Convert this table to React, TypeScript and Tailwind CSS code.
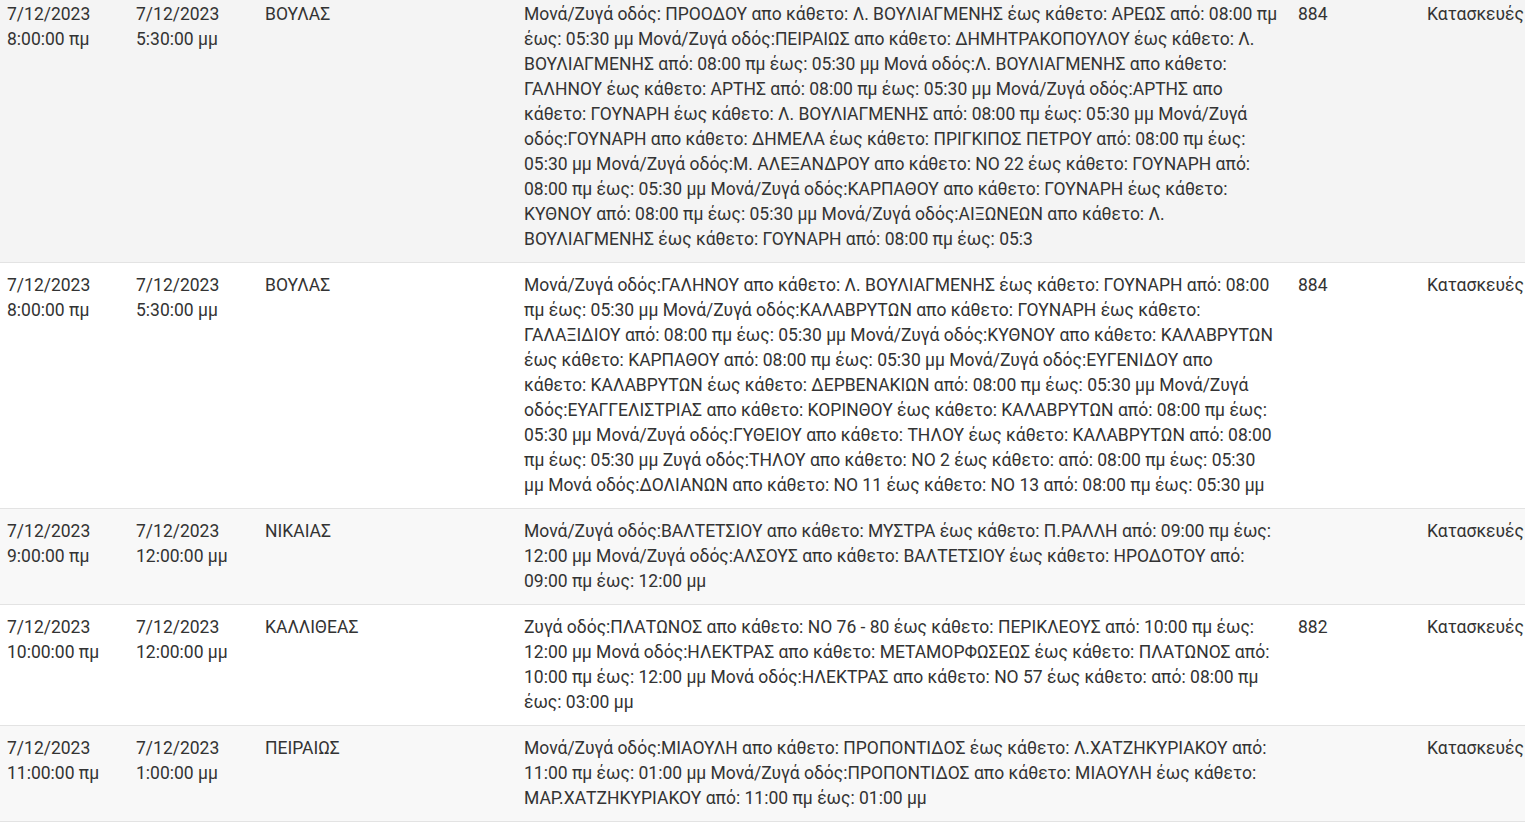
import React from 'react'

type Row = {
  from: [string, string]
  to: [string, string]
  area: string
  desc: string
  code: string
  type: string
  bg: string
}

const rows: Row[] = [
  {
    from: ['7/12/2023', '8:00:00 πμ'],
    to: ['7/12/2023', '5:30:00 μμ'],
    area: 'ΒΟΥΛΑΣ',
    desc: 'Μονά/Ζυγά οδός: ΠΡΟΟΔΟΥ απο κάθετο: Λ. ΒΟΥΛΙΑΓΜΕΝΗΣ έως κάθετο: ΑΡΕΩΣ από: 08:00 πμ έως: 05:30 μμ Μονά/Ζυγά οδός:ΠΕΙΡΑΙΩΣ απο κάθετο: ΔΗΜΗΤΡΑΚΟΠΟΥΛΟΥ έως κάθετο: Λ. ΒΟΥΛΙΑΓΜΕΝΗΣ από: 08:00 πμ έως: 05:30 μμ Μονά οδός:Λ. ΒΟΥΛΙΑΓΜΕΝΗΣ απο κάθετο: ΓΑΛΗΝΟΥ έως κάθετο: ΑΡΤΗΣ από: 08:00 πμ έως: 05:30 μμ Μονά/Ζυγά οδός:ΑΡΤΗΣ απο κάθετο: ΓΟΥΝΑΡΗ έως κάθετο: Λ. ΒΟΥΛΙΑΓΜΕΝΗΣ από: 08:00 πμ έως: 05:30 μμ Μονά/Ζυγά οδός:ΓΟΥΝΑΡΗ απο κάθετο: ΔΗΜΕΛΑ έως κάθετο: ΠΡΙΓΚΙΠΟΣ ΠΕΤΡΟΥ από: 08:00 πμ έως: 05:30 μμ Μονά/Ζυγά οδός:Μ. ΑΛΕΞΑΝΔΡΟΥ απο κάθετο: ΝΟ 22 έως κάθετο: ΓΟΥΝΑΡΗ από: 08:00 πμ έως: 05:30 μμ Μονά/Ζυγά οδός:ΚΑΡΠΑΘΟΥ απο κάθετο: ΓΟΥΝΑΡΗ έως κάθετο: ΚΥΘΝΟΥ από: 08:00 πμ έως: 05:30 μμ Μονά/Ζυγά οδός:ΑΙΞΩΝΕΩΝ απο κάθετο: Λ. ΒΟΥΛΙΑΓΜΕΝΗΣ έως κάθετο: ΓΟΥΝΑΡΗ από: 08:00 πμ έως: 05:3',
    code: '884',
    type: 'Κατασκευές',
    bg: 'bg-[#f4f4f4]',
  },
  {
    from: ['7/12/2023', '8:00:00 πμ'],
    to: ['7/12/2023', '5:30:00 μμ'],
    area: 'ΒΟΥΛΑΣ',
    desc: 'Μονά/Ζυγά οδός:ΓΑΛΗΝΟΥ απο κάθετο: Λ. ΒΟΥΛΙΑΓΜΕΝΗΣ έως κάθετο: ΓΟΥΝΑΡΗ από: 08:00 πμ έως: 05:30 μμ Μονά/Ζυγά οδός:ΚΑΛΑΒΡΥΤΩΝ απο κάθετο: ΓΟΥΝΑΡΗ έως κάθετο: ΓΑΛΑΞΙΔΙΟΥ από: 08:00 πμ έως: 05:30 μμ Μονά/Ζυγά οδός:ΚΥΘΝΟΥ απο κάθετο: ΚΑΛΑΒΡΥΤΩΝ έως κάθετο: ΚΑΡΠΑΘΟΥ από: 08:00 πμ έως: 05:30 μμ Μονά/Ζυγά οδός:ΕΥΓΕΝΙΔΟΥ απο κάθετο: ΚΑΛΑΒΡΥΤΩΝ έως κάθετο: ΔΕΡΒΕΝΑΚΙΩΝ από: 08:00 πμ έως: 05:30 μμ Μονά/Ζυγά οδός:ΕΥΑΓΓΕΛΙΣΤΡΙΑΣ απο κάθετο: ΚΟΡΙΝΘΟΥ έως κάθετο: ΚΑΛΑΒΡΥΤΩΝ από: 08:00 πμ έως: 05:30 μμ Μονά/Ζυγά οδός:ΓΥΘΕΙΟΥ απο κάθετο: ΤΗΛΟΥ έως κάθετο: ΚΑΛΑΒΡΥΤΩΝ από: 08:00 πμ έως: 05:30 μμ Ζυγά οδός:ΤΗΛΟΥ απο κάθετο: ΝΟ 2 έως κάθετο: από: 08:00 πμ έως: 05:30 μμ Μονά οδός:ΔΟΛΙΑΝΩΝ απο κάθετο: ΝΟ 11 έως κάθετο: ΝΟ 13 από: 08:00 πμ έως: 05:30 μμ',
    code: '884',
    type: 'Κατασκευές',
    bg: 'bg-white',
  },
  {
    from: ['7/12/2023', '9:00:00 πμ'],
    to: ['7/12/2023', '12:00:00 μμ'],
    area: 'ΝΙΚΑΙΑΣ',
    desc: 'Μονά/Ζυγά οδός:ΒΑΛΤΕΤΣΙΟΥ απο κάθετο: ΜΥΣΤΡΑ έως κάθετο: Π.ΡΑΛΛΗ από: 09:00 πμ έως: 12:00 μμ Μονά/Ζυγά οδός:ΑΛΣΟΥΣ απο κάθετο: ΒΑΛΤΕΤΣΙΟΥ έως κάθετο: ΗΡΟΔΟΤΟΥ από: 09:00 πμ έως: 12:00 μμ',
    code: '',
    type: 'Κατασκευές',
    bg: 'bg-[#f8f8f8]',
  },
  {
    from: ['7/12/2023', '10:00:00 πμ'],
    to: ['7/12/2023', '12:00:00 μμ'],
    area: 'ΚΑΛΛΙΘΕΑΣ',
    desc: 'Ζυγά οδός:ΠΛΑΤΩΝΟΣ απο κάθετο: ΝΟ 76 - 80 έως κάθετο: ΠΕΡΙΚΛΕΟΥΣ από: 10:00 πμ έως: 12:00 μμ Μονά οδός:ΗΛΕΚΤΡΑΣ απο κάθετο: ΜΕΤΑΜΟΡΦΩΣΕΩΣ έως κάθετο: ΠΛΑΤΩΝΟΣ από: 10:00 πμ έως: 12:00 μμ Μονά οδός:ΗΛΕΚΤΡΑΣ απο κάθετο: ΝΟ 57 έως κάθετο: από: 08:00 πμ έως: 03:00 μμ',
    code: '882',
    type: 'Κατασκευές',
    bg: 'bg-white',
  },
  {
    from: ['7/12/2023', '11:00:00 πμ'],
    to: ['7/12/2023', '1:00:00 μμ'],
    area: 'ΠΕΙΡΑΙΩΣ',
    desc: 'Μονά/Ζυγά οδός:ΜΙΑΟΥΛΗ απο κάθετο: ΠΡΟΠΟΝΤΙΔΟΣ έως κάθετο: Λ.ΧΑΤΖΗΚΥΡΙΑΚΟΥ από: 11:00 πμ έως: 01:00 μμ Μονά/Ζυγά οδός:ΠΡΟΠΟΝΤΙΔΟΣ απο κάθετο: ΜΙΑΟΥΛΗ έως κάθετο: ΜΑΡ.ΧΑΤΖΗΚΥΡΙΑΚΟΥ από: 11:00 πμ έως: 01:00 μμ',
    code: '',
    type: 'Κατασκευές',
    bg: 'bg-[#f8f8f8]',
  },
]

export default function App() {
  return (
    <div className="h-[826px] w-[1525px] overflow-hidden bg-white font-['Roboto',sans-serif] text-[17.5px] leading-[25px] text-[#333]">
      <table className="-mt-[8px] w-[1640px] table-fixed border-collapse">
        <colgroup>
          <col className="w-[129px]" />
          <col className="w-[129px]" />
          <col className="w-[259px]" />
          <col className="w-[774px]" />
          <col className="w-[129px]" />
          <col className="w-[220px]" />
        </colgroup>
        <tbody>
          {rows.map((r, i) => (
            <tr key={i} className={`${r.bg} border-b border-[#e3e3e3] align-top`}>
              <td className="py-[10px] pl-[7px] pr-[8px]">
                <div>{r.from[0]}</div>
                <div>{r.from[1]}</div>
              </td>
              <td className="py-[10px] pl-[7px] pr-[8px]">
                <div>{r.to[0]}</div>
                <div>{r.to[1]}</div>
              </td>
              <td className="py-[10px] pl-[7px] pr-[8px]">{r.area}</td>
              <td className="py-[10px] pl-[7px] pr-[12px]">{r.desc}</td>
              <td className="py-[10px] pl-[7px] pr-[8px]">{r.code}</td>
              <td className="py-[10px] pl-[7px] pr-[8px] whitespace-nowrap">{r.type}</td>
            </tr>
          ))}
        </tbody>
      </table>
    </div>
  )
}
